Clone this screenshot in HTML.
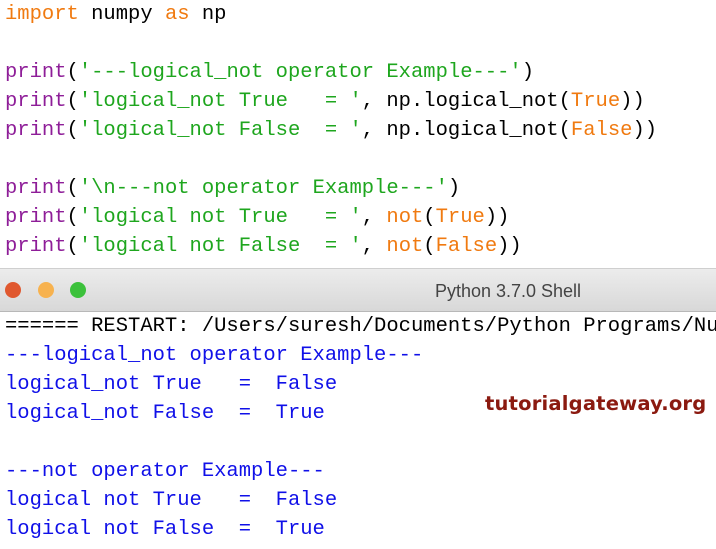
<!DOCTYPE html>
<html><head><style>
html,body{margin:0;padding:0;width:716px;height:549px;overflow:hidden;background:#fff}
.code{position:absolute;left:5px;font-family:"Liberation Mono",monospace;font-size:20.5px;line-height:29px;white-space:pre;}
.o{color:#f07a10}.k{color:#000}.p{color:#8e1d98}.g{color:#1ea61e}.b{color:#1010e8}
#bar{position:absolute;left:0;top:268px;width:716px;height:42px;background:linear-gradient(#ececec,#d8d8d8);border-top:1px solid #cfcfcf;border-bottom:1px solid #b8b8b8}
.dot{position:absolute;top:13px;width:16px;height:16px;border-radius:50%}
#title{position:absolute;left:0;width:1016px;top:12px;text-align:center;font-family:"Liberation Sans",sans-serif;font-size:18px;color:#444}
#wm{position:absolute;left:485px;top:392px;font-family:"DejaVu Sans",sans-serif;font-weight:bold;font-size:19.5px;color:#8b1a10;letter-spacing:0.2px}
</style></head><body>
<div class="code" style="top:0px"><span class="o">import</span> numpy <span class="o">as</span> np

<span class="p">print</span>(<span class="g">'---logical_not operator Example---'</span>)
<span class="p">print</span>(<span class="g">'logical_not True   = '</span>, np.logical_not(<span class="o">True</span>))
<span class="p">print</span>(<span class="g">'logical_not False  = '</span>, np.logical_not(<span class="o">False</span>))

<span class="p">print</span>(<span class="g">'\n---not operator Example---'</span>)
<span class="p">print</span>(<span class="g">'logical not True   = '</span>, <span class="o">not</span>(<span class="o">True</span>))
<span class="p">print</span>(<span class="g">'logical not False  = '</span>, <span class="o">not</span>(<span class="o">False</span>))</div>
<div id="bar">
<div class="dot" style="left:5px;background:#e0582f"></div>
<div class="dot" style="left:38px;background:#f7b24f"></div>
<div class="dot" style="left:70px;background:#3cc13b"></div>
<div id="title">Python 3.7.0 Shell</div>
</div>
<div class="code" style="top:312px"><span class="k">====== RESTART: /Users/suresh/Documents/Python Programs/Nu</span>
<span class="b">---logical_not operator Example---
logical_not True   =  False
logical_not False  =  True

---not operator Example---
logical not True   =  False
logical not False  =  True</span></div>
<div id="wm">tutorialgateway.org</div>
</body></html>
